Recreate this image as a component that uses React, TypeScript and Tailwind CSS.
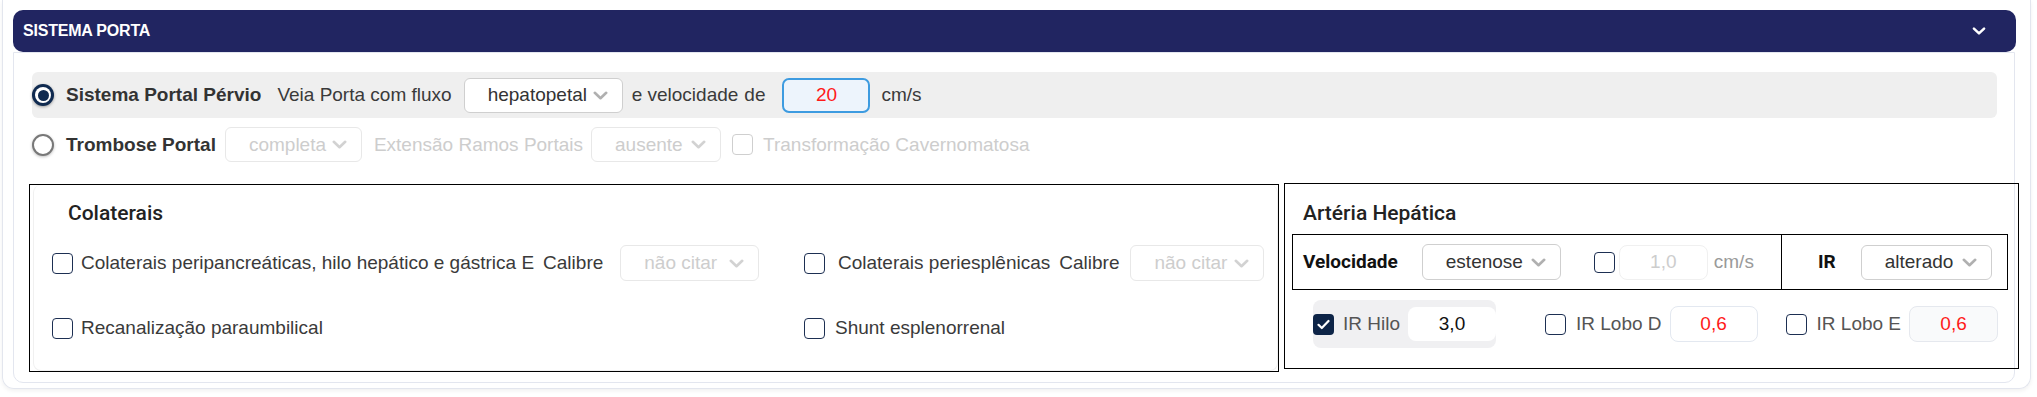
import React from "react";

const Chevron = ({ color = "#b3b3b3", w = 15, h = 9, sw = 2.6 }: { color?: string; w?: number; h?: number; sw?: number }) => (
  <svg width={w} height={h} viewBox="0 0 15 9" fill="none" className="shrink-0">
    <path d="M1.8 1.8 L7.5 7.2 L13.2 1.8" stroke={color} strokeWidth={sw} strokeLinecap="round" strokeLinejoin="round" />
  </svg>
);

function Select({ value, className, disabled }: { value: string; className: string; disabled?: boolean }) {
  return (
    <div
      className={`flex items-center justify-between pl-[23px] pr-[14px] rounded-[6px] border bg-white shrink-0 ${
        disabled ? "border-[#e8e8e8] text-[#cdcdcd]" : "border-[#cfcfcf] text-[#333333]"
      } ${className}`}
    >
      <span>{value}</span>
      <Chevron color={disabled ? "#d2d2d2" : "#b0b0b0"} />
    </div>
  );
}

function Checkbox({ checked, disabled, className = "" }: { checked?: boolean; disabled?: boolean; className?: string }) {
  if (checked) {
    return (
      <span className={`w-[21px] h-[21px] rounded-[4px] bg-[#0d2447] flex items-center justify-center shrink-0 ${className}`}>
        <svg width="13" height="11" viewBox="0 0 13 11" fill="none">
          <path d="M1.5 5.8 L4.8 9 L11.5 2" stroke="white" strokeWidth="2.2" strokeLinecap="round" strokeLinejoin="round" />
        </svg>
      </span>
    );
  }
  return (
    <span
      className={`block w-[21px] h-[21px] rounded-[4px] border-[1.5px] bg-white shrink-0 ${
        disabled ? "border-[#cfcfcf]" : "border-[#1d2f52]"
      } ${className}`}
    />
  );
}

function Radio({ checked }: { checked?: boolean }) {
  if (checked) {
    return (
      <span className="w-[22px] h-[22px] rounded-full bg-[#0f2a50] flex items-center justify-center shrink-0 shadow-[0_1px_3px_rgba(0,0,0,0.35)]">
        <span className="w-[16px] h-[16px] rounded-full bg-white flex items-center justify-center">
          <span className="w-[11px] h-[11px] rounded-full bg-[#0f2a50]" />
        </span>
      </span>
    );
  }
  return (
    <span className="block w-[22px] h-[22px] rounded-full border-[2.5px] border-[#787878] bg-white shrink-0 shadow-[0_1px_3px_rgba(0,0,0,0.25)]" />
  );
}

export default function App() {
  return (
    <div className="w-[2037px] h-[397px] bg-white overflow-hidden font-['Liberation_Sans',Arial,sans-serif] text-[19px] leading-[22px] text-[#3a3a3a]">
      <div className="ml-[2px] w-[2029px] h-[389px] border-x border-b border-[#e3e6ee] rounded-b-[12px] shadow-[0_2px_4px_rgba(0,0,0,0.06)] pl-[10px] pr-[14px] pt-[10px]">
        {/* Header */}
        <div className="h-[42px] w-[2003px] rounded-[10px] bg-[#212561] flex items-center justify-between pl-[10px] pr-[30px]">
          <span className="text-white font-bold text-[16px] leading-none tracking-[-0.2px]">SISTEMA PORTA</span>
          <Chevron color="#ffffff" w={14} h={8} sw={2.8} />
        </div>

        {/* Card body */}
        <div className="w-[2002px] h-[331px] border border-[#e3e6ef] rounded-b-[10px] pl-[18px] pr-[17px] pt-[19px]">
          {/* Row 1 */}
          <div className="h-[46px] rounded-[6px] bg-[#efefef] flex items-center">
            <Radio checked />
            <span className="ml-[12px] font-bold text-[#333333]">Sistema Portal Pérvio</span>
            <span className="ml-[16px] text-[#3a3a3a]">Veia Porta com fluxo</span>
            <Select value="hepatopetal" className="ml-[12px] w-[159px] h-[35px]" />
            <span className="ml-[9px]">e velocidade</span>
            <span className="ml-[6px]">de</span>
            <div className="ml-[17px] w-[88px] h-[35px] rounded-[7px] border-2 border-[#3d9be0] bg-[#edf4fc] flex items-center justify-center text-[#ff1a1a]">
              20
            </div>
            <span className="ml-[11px]">cm/s</span>
          </div>

          {/* Row 2 */}
          <div className="mt-[8px] h-[37px] flex items-center">
            <Radio />
            <span className="ml-[12px] font-bold text-[#333333]">Trombose Portal</span>
            <Select value="completa" disabled className="ml-[9px] w-[137px] h-[35px]" />
            <span className="ml-[12px] text-[#cdcdcd]">Extensão Ramos Portais</span>
            <Select value="ausente" disabled className="ml-[8px] w-[130px] h-[35px]" />
            <Checkbox disabled className="ml-[11px]" />
            <span className="ml-[10px] text-[#cdcdcd]">Transformação Cavernomatosa</span>
          </div>

          {/* Bottom section */}
          <div className="mt-[21px] flex items-start">
            {/* Colaterais */}
            <div className="-ml-[3px] w-[1250px] h-[188px] border border-black shrink-0">
              <div className="h-full ml-[3px] rounded-[8px] border border-[#f0f0f0] border-t-0 pt-[14px]">
                <div className="pl-[34px] font-['Roboto',sans-serif] font-medium text-[21px] leading-[28px] text-[#222222]">
                  Colaterais
                </div>
                <div className="mt-[17px] h-[38px] flex items-center pl-[18px]">
                  <div className="w-[752px] flex items-center shrink-0">
                    <Checkbox />
                    <span className="ml-[8px]">Colaterais peripancreáticas, hilo hepático e gástrica E</span>
                    <span className="ml-[9px]">Calibre</span>
                    <Select value="não citar" disabled className="ml-[17px] w-[139px] h-[36px]" />
                  </div>
                  <div className="flex items-center">
                    <Checkbox />
                    <span className="ml-[13px]">Colaterais periesplênicas</span>
                    <span className="ml-[9px]">Calibre</span>
                    <Select value="não citar" disabled className="ml-[11px] w-[134px] h-[36px]" />
                  </div>
                </div>
                <div className="mt-[27px] h-[38px] flex items-center pl-[18px]">
                  <div className="w-[752px] flex items-center shrink-0">
                    <Checkbox />
                    <span className="ml-[8px]">Recanalização paraumbilical</span>
                  </div>
                  <div className="flex items-center">
                    <Checkbox />
                    <span className="ml-[10px]">Shunt esplenorrenal</span>
                  </div>
                </div>
              </div>
            </div>

            {/* Artéria Hepática */}
            <div className="ml-[5px] -mt-[1px] w-[735px] h-[186px] border border-black shrink-0 pl-[7px] pt-[15px]">
              <div className="ml-[11px] font-['Roboto',sans-serif] font-medium text-[21px] leading-[28px] text-[#222222]">
                Artéria Hepática
              </div>
              <div className="mt-[7px] w-[716px] h-[56px] border border-black flex items-stretch">
                <div className="w-[489px] border-r border-black flex items-center pl-[10px] shrink-0">
                  <span className="font-['Roboto',sans-serif] font-bold text-[19px] text-[#111111]">Velocidade</span>
                  <Select value="estenose" className="ml-[24px] w-[139px] h-[36px]" />
                  <Checkbox className="ml-[33px]" />
                  <div className="ml-[4px] w-[89px] h-[35px] rounded-[8px] border border-[#f0f0f0] bg-white flex items-center justify-center text-[#cdcdcd]">
                    1,0
                  </div>
                  <span className="ml-[6px] text-[#9a9a9a]">cm/s</span>
                </div>
                <div className="flex items-center pl-[36px]">
                  <span className="font-['Roboto',sans-serif] font-bold text-[19px] text-[#111111]">IR</span>
                  <Select value="alterado" className="ml-[25px] w-[131px] h-[35px]" />
                </div>
              </div>
              <div className="mt-[10px] flex items-center">
                <div className="ml-[21px] w-[183px] h-[48px] rounded-[8px] bg-[#f0f0f2] flex items-center shrink-0">
                  <Checkbox checked />
                  <span className="ml-[9px] text-[#555555]">IR Hilo</span>
                  <div className="ml-auto w-[88px] h-[34px] rounded-[8px] bg-white flex items-center justify-center text-[#111111]">
                    3,0
                  </div>
                </div>
                <Checkbox className="ml-[49px]" />
                <span className="ml-[10px] text-[#555555]">IR Lobo D</span>
                <div className="ml-[8px] w-[88px] h-[36px] rounded-[8px] border border-[#e3e8f0] bg-white flex items-center justify-center text-[#ff1a1a]">
                  0,6
                </div>
                <Checkbox className="ml-[28px]" />
                <span className="ml-[10px] text-[#555555]">IR Lobo E</span>
                <div className="ml-[8px] w-[89px] h-[36px] rounded-[8px] border border-[#e5e8ee] bg-[#f9fafb] flex items-center justify-center text-[#ff1a1a]">
                  0,6
                </div>
              </div>
            </div>
          </div>
        </div>
      </div>
    </div>
  );
}
